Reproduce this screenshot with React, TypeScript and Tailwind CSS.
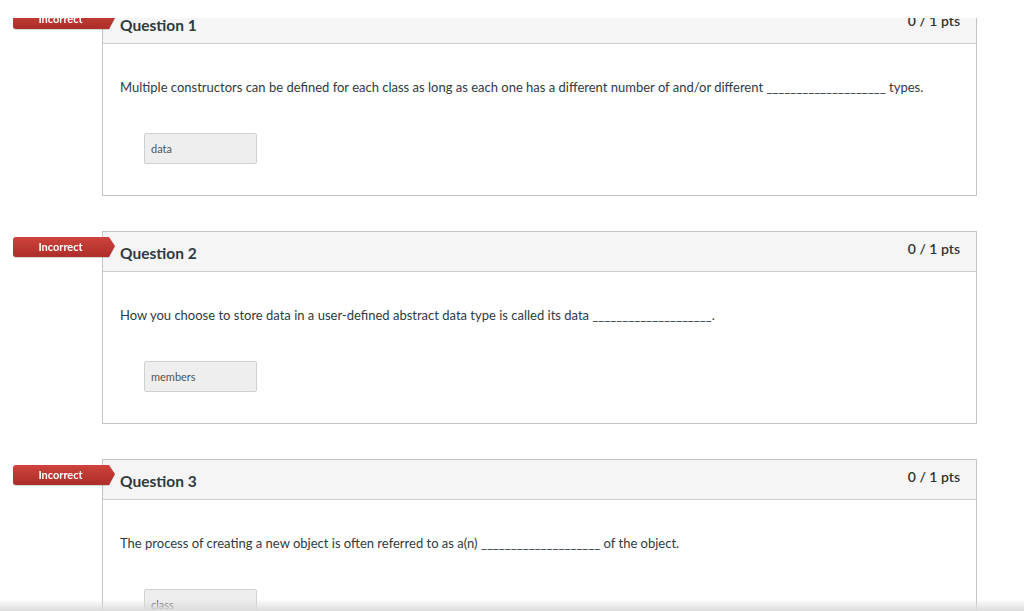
import React from 'react';

interface Question {
  title: string;
  before: string;
  after: string;
  answer: string;
}

const questions: Question[] = [
  {
    title: 'Question 1',
    before: 'Multiple constructors can be defined for each class as long as each one has a different number of and/or different',
    after: ' types.',
    answer: 'data',
  },
  {
    title: 'Question 2',
    before: 'How you choose to store data in a user-defined abstract data type is called its data',
    after: '.',
    answer: 'members',
  },
  {
    title: 'Question 3',
    before: 'The process of creating a new object is often referred to as a(n)',
    after: ' of the object.',
    answer: 'class',
  },
];

const Badge: React.FC = () => (
  <div className="absolute left-[-90px] top-[5px] flex h-[20px] items-stretch drop-shadow-[0_1px_0_rgba(0,0,0,0.15)]">
    <div className="flex w-[92px] items-center justify-center rounded-l-[3px] bg-gradient-to-b from-[#cf433d] to-[#ad2d28] pl-[3px] text-[11px] font-bold text-white">
      Incorrect
    </div>
    <svg width="10" height="20" viewBox="0 0 10 20" className="block">
      <defs>
        <linearGradient id="badgeGrad" x1="0" y1="0" x2="0" y2="1">
          <stop offset="0" stopColor="#cf433d" />
          <stop offset="1" stopColor="#ad2d28" />
        </linearGradient>
      </defs>
      <polygon points="0,0 4,0 10,9 4,20 0,20" fill="url(#badgeGrad)" />
    </svg>
  </div>
);

const QuestionCard: React.FC<{ q: Question }> = ({ q }) => (
  <div className="relative w-[875px] border border-[#c4c4c4] bg-white">
    <Badge />
    <div className="flex h-[40px] justify-between border-b border-[#cfcfcf] bg-[#f5f5f5] pl-[17px] pr-[16px]">
      <h2 className="pt-[11px] text-[15.5px] font-bold leading-[20px] text-[#2d3b45]">{q.title}</h2>
      <span className="pt-[8px] text-[14px] font-semibold leading-[18px] text-[#333]">0 / 1 pts</span>
    </div>
    <div className="h-[151px] pl-[17px] pt-[34px]">
      <p className="text-[13px] leading-[18px] text-[#2d3b45]">
        {q.before} <span>____________________</span>
        {q.after}
      </p>
      <div className="ml-[24px] mt-[37px] flex h-[31px] w-[113px] items-center rounded-[2px] border border-[#d0d0d0] bg-[#eeeeee] pl-[6px] pt-[2px] text-[11px] text-[#555]">
        {q.answer}
      </div>
    </div>
  </div>
);

export default function App() {
  return (
    <div className="relative h-[611px] w-[1024px] overflow-hidden bg-white font-['Lato','Liberation_Sans',sans-serif]">
      <div className="flex flex-col gap-[35px] pl-[102px] pt-[3px]">
        {questions.map((q) => (
          <QuestionCard key={q.title} q={q} />
        ))}
      </div>
      <div className="absolute left-0 right-0 top-0 z-10 h-[18px] bg-white" />
      <div className="absolute bottom-0 left-0 right-0 z-10 h-[12px] bg-gradient-to-b from-transparent to-[#dcdcdc]" />
    </div>
  );
}
